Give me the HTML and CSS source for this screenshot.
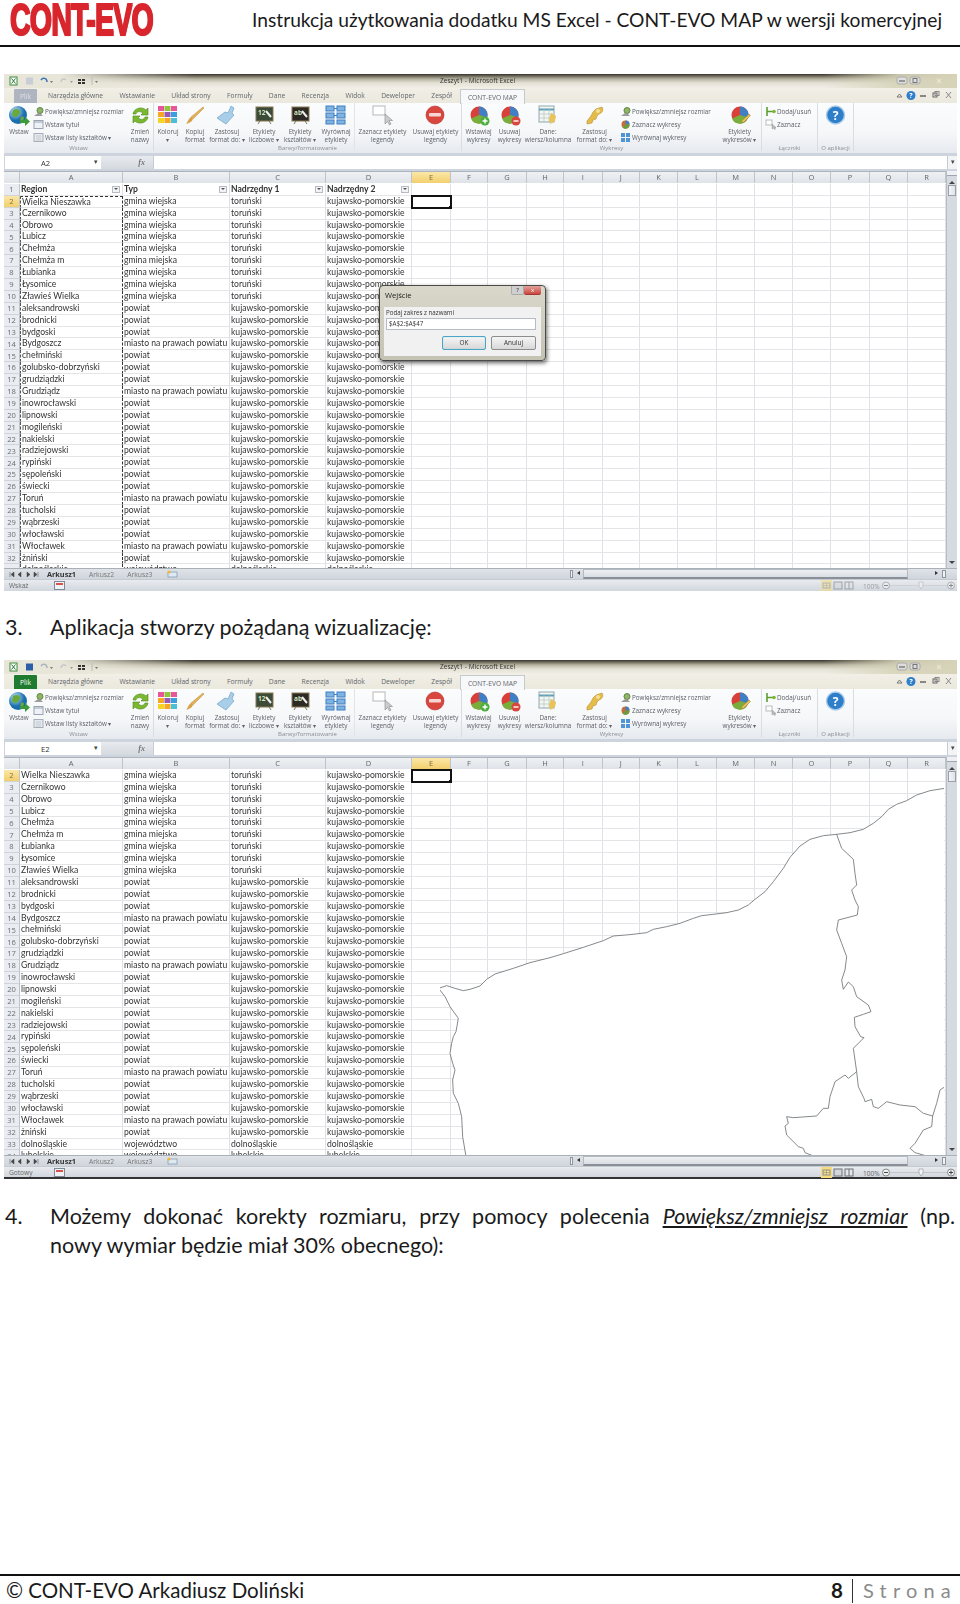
FILE: index.html
```html
<!DOCTYPE html>
<html lang="pl">
<head>
<meta charset="utf-8">
<title>CONT-EVO MAP</title>
<link rel="stylesheet" href="styles.css">
</head>
<body>
<header class="page-head">
  <div class="logo"><span class="logo-text">CONT-EVO</span></div>
  <div class="doc-title">Instrukcja użytkowania dodatku MS Excel - CONT-EVO MAP w wersji komercyjnej</div>
</header>
<main>
  <section class="sheet sheet-one" id="sheet1"></section>
  <div class="step step-three"><span class="num">3.</span><div class="step-text">Aplikacja stworzy pożądaną wizualizację:</div></div>
  <section class="sheet sheet-two" id="sheet2"></section>
  <div class="step step-four"><span class="num">4.</span><div class="step-text"><div class="line-just">Możemy dokonać korekty rozmiaru, przy pomocy polecenia <em class="cmd">Powiększ/zmniejsz rozmiar</em> (np.</div><div>nowy wymiar będzie miał 30% obecnego):</div></div></div>
</main>
<footer class="page-foot">
  <div class="copy">© CONT-EVO Arkadiusz Doliński</div>
  <div class="pager"><b>8</b><span class="bar"></span><span class="strona">Strona</span></div>
</footer>
<script src="app.js"></script>
</body>
</html>
```
FILE: styles.css
```css
* { box-sizing: border-box; }
html, body { margin: 0; padding: 0; background: #fff; }
body { width: 960px; height: 1604px; overflow: hidden; display: flex; flex-direction: column; font-family: Lato, "Noto Sans", sans-serif; color: #111; }

.page-head { height: 47px; flex: none; display: flex; align-items: flex-start; justify-content: space-between; border-bottom: 2px solid #111; padding: 0 18px 0 10px; }
.logo { width: 145px; height: 40px; }
.logo-text { display: inline-block; font: 700 43px/38px "Liberation Sans", sans-serif; color: #d9252c; -webkit-text-stroke: 2px #d9252c; letter-spacing: -1px; transform: scale(.66, 1.02); transform-origin: 0 0; white-space: nowrap; text-shadow: 1px 1px 1px #a33; }
.doc-title { font-size: 19.2px; line-height: 26px; margin-top: 7px; white-space: nowrap; color: #1a1a1a; }

main { flex: none; }

/* Excel window */
.sheet { position: relative; width: 953px; margin-left: 4px; display: flex; flex-direction: column; font-family: "Open Sans", sans-serif; color: #5d6168; filter: blur(.38px); background: #cdd4dd; overflow: hidden; }
.sheet-one { height: 517px; margin-top: 27px; }
.sheet-two { height: 518px; margin-top: 18px; box-shadow: 0 1px 0 #333; }

.titlebar { height: 14px; flex: none; position: relative; display: flex; align-items: center; background: linear-gradient(90deg, #e8e6d8 0, #e8e6d8 6%, rgba(232,230,216,0) 20%, rgba(232,230,216,0) 86%, rgba(214,211,185,.9) 94%, #d6d3b9 100%), linear-gradient(180deg, #35322b 0, #6c685a 2px, #b8b4a2 5px, #e4e2d6 9px, #f1efe6 14px); }
.qat { margin-left: 4px; width: 92px; height: 12px; }
.app-name { position: absolute; left: 436px; top: 2px; font-size: 6.6px; line-height: 10px; color: #333; white-space: nowrap; }
.winbtns { position: absolute; right: 2px; top: 1px; width: 60px; height: 12px; }

.tabs { height: 15px; flex: none; position: relative; display: flex; align-items: center; padding-left: 44px; background: linear-gradient(180deg, #f1efe6, #ebe9dd); font-size: 6.7px; white-space: nowrap; }
.tab { margin-right: 16.3px; color: #62656b; }
.tab-file { position: absolute; left: 10px; top: 1px; width: 23px; height: 14px; display: flex; align-items: center; justify-content: center; color: #fff; background: #1f7c2f; margin: 0; border-radius: 1px 1px 0 0; }
.sheet-one .tab-file { background: #aeb4c0; color: #dfe2e6; }
.tab-active { position: absolute; left: 456px; top: 1px; width: 65px; height: 15px; display: flex; align-items: center; justify-content: center; margin: 0; background: #f7f8fa; border: 1px solid #c6c9cd; border-bottom: 0; }
.tabs-right { position: absolute; right: 3px; top: 1px; width: 62px; height: 13px; }

.ribbon { height: 50px; flex: none; display: flex; background: linear-gradient(180deg, #fbfcfd 0, #f5f7f9 60%, #e6e9ee 100%); font-size: 6.3px; line-height: 7.8px; }
.group { position: relative; flex: none; display: flex; border-right: 1px solid #d9dce1; height: 48px; }
.group-label { position: absolute; left: 0; right: 0; bottom: -1px; text-align: center; color: #8b8f95; font-size: 6px; line-height: 8px; white-space: nowrap; }
.big { flex: none; display: flex; flex-direction: column; align-items: center; text-align: center; padding-top: 2px; white-space: pre-line; }
.big .ico { height: 21px; width: 22px; margin-bottom: 2px; flex: none; }
.big-sep { border-right: 1px solid #e2e4e8; }
.smalls { flex: none; display: flex; flex-direction: column; padding: 2px 0 0 0; }
.small { height: 13.2px; display: flex; align-items: center; white-space: nowrap; margin-left: -1px; }
.small .ico16 { width: 11px; height: 11px; margin-right: 1px; flex: none; }

.formula { height: 13px; margin-top: 3px; flex: none; display: flex; align-items: stretch; font-size: 7.6px; color: #333; }
.namebox { width: 96px; margin-left: 1px; background: #fff; position: relative; display: flex; align-items: center; padding-left: 36px; }
.namebox::after { content: "▾"; position: absolute; right: 3px; top: 0; font-size: 7px; line-height: 12px; color: #444; }
.fx-area { width: 52px; display: flex; align-items: center; justify-content: flex-end; padding-right: 8px; font: italic 700 8px "Liberation Serif", serif; color: #777; background: linear-gradient(180deg, #e7eaee, #d5dae0); }
.input { flex: 1; background: #fff; border-left: 1px solid #c7ccd2; }
.fx-drop { width: 10px; background: #f3f4f6; border-left: 1px solid #c7ccd2; text-align: center; line-height: 11px; font-size: 7px; color: #444; }

.workarea { flex: 1; min-height: 0; margin-top: 2px; display: flex; position: relative; }
.cells { flex: 1; min-width: 0; overflow: hidden; background: #fff; border-top: 1px solid #aeb4bc; }
.grid { display: grid; grid-template-columns: 16px 103px 107px 96px 86px 39px 37px 39px 37px 38.5px 37.5px 38px 39px 38px 38px 38px 39px 38px 38px; grid-auto-rows: 11.9px; font-family: Lato, sans-serif; font-size: 8.6px; line-height: 10.5px; color: #333; }
.head { height: 11px; display: flex; align-items: center; justify-content: center; background: linear-gradient(180deg, #eff1f4, #dfe3e8); border-right: 1px solid #bfc4ca; color: #666; font-size: 7.5px; font-family: "Open Sans", sans-serif; }
.head-on { background: linear-gradient(180deg, #fbe7a8, #f3cf6d); color: #7b6a3c; }
.rownum { display: flex; align-items: center; justify-content: center; background: #e9ecf0; border-right: 1px solid #bfc4ca; border-bottom: 1px solid #d0d4d9; color: #6a6e74; font-size: 7.6px; font-family: "Open Sans", sans-serif; }
.rownum-on { background: linear-gradient(180deg, #fbe7a8, #f3cf6d); color: #84703c; }
.cell { position: relative; border-right: 1px solid #dfe1e4; border-bottom: 1px solid #e4e5e8; padding-left: 1px; white-space: nowrap; overflow: visible; min-width: 0; }
.cell-b { font-weight: 700; color: #333; }
.ants { border-left: 1px dashed #555; border-right: 1px dashed #333; }
.ants-top { border-top: 1px dashed #333; }
.filter { position: absolute; right: 2px; top: 2px; width: 8px; height: 7px; border: 1px solid #b8bcc2; background: #f2f3f5; }
.filter::after { content: ""; position: absolute; left: 1px; top: 1.5px; border: 2px solid transparent; border-top: 2.5px solid #555; }
.selected { outline: 2px solid #111; outline-offset: -1px; z-index: 1; }
.selected::after { content: ""; position: absolute; right: -2px; bottom: -2px; width: 3px; height: 3px; background: #111; }

.vscroll { width: 11px; flex: none; position: relative; background: #d6dbe2; border-left: 1px solid #b8bec6; }
.v-split { height: 5px; background: #eef0f3; border-bottom: 1px solid #9ea5ae; }
.v-up, .v-down { position: absolute; left: 2px; width: 0; height: 0; border: 3px solid transparent; }
.v-up { top: 7px; border-bottom: 3px solid #444; }
.v-down { bottom: 1px; border-top: 3px solid #444; }
.v-thumb { position: absolute; left: 1px; right: 1px; top: 14px; height: 11px; background: linear-gradient(90deg, #f4f5f7, #dfe3e8); border: 1px solid #99a0a9; }

.map { position: absolute; left: 436px; top: 13px; width: 504px; height: 386px; z-index: 2; }
.map-land { fill: #fff; stroke: #666b6f; stroke-width: 2.4; stroke-linejoin: round; }
.map-line { fill: none; stroke: #666b6f; stroke-width: 2.4; stroke-linejoin: round; }

.sheettabs { height: 11px; flex: none; display: flex; align-items: center; position: relative; z-index: 3; background: linear-gradient(180deg, #dfe3e8, #cfd5dc); border-top: 1px solid #aab0b8; font-size: 6.8px; white-space: nowrap; }
.nav-ico { width: 36px; height: 9px; margin-left: 3px; margin-right: 4px; }
.stab { margin-right: 13px; color: #777; }
.stab-on { font-weight: 700; color: #333; font-size: 7.3px; }
.newtab { width: 14px; height: 8px; }
.hsplit { position: absolute; left: 566px; top: 1px; width: 3px; height: 8px; background: #f2f3f5; border: 1px solid #8f959d; }
.h-left, .h-right { position: absolute; top: 2px; border: 2.5px solid transparent; }
.h-left { left: 571px; border-right: 3px solid #333; }
.h-right { left: 931px; border-left: 3px solid #333; }
.hthumb { position: absolute; left: 579px; width: 325px; top: 0; bottom: 0; background: linear-gradient(180deg, #eef0f3, #d9dde3); border: 1px solid #b4bac2; border-bottom: 2px solid #8a9099; }
.hend { position: absolute; left: 938px; top: 1px; width: 4px; height: 8px; background: #f2f3f5; border: 1px solid #8f959d; }

.status { height: 12px; flex: none; display: flex; align-items: center; position: relative; z-index: 3; background: linear-gradient(180deg, #e8ebef, #d2d7de); border-top: 1px solid #c5cad0; font-size: 6.6px; color: #666; }
.sheet-two .status { border-bottom: 1px solid #333; }
.status-label { width: 50px; padding-left: 5px; }
.macro { width: 11px; height: 9px; }
.status-right { position: absolute; right: 1px; top: 0; height: 11px; width: 136px; }
.sheet-one .status-right { opacity: .55; }

.dialog { position: absolute; left: 375px; top: 114px; width: 167px; height: 76px; z-index: 5; border-radius: 4px; border: 1px solid #4a4a46; background: linear-gradient(180deg, #d9d8cb, #c3c2b3); box-shadow: 1px 2px 4px rgba(0,0,0,.6); padding: 0 4px 4px; display: flex; flex-direction: column; color: #333; }
.dlg-head { height: 21px; flex: none; position: relative; font-size: 7.6px; line-height: 18px; padding-left: 1px; color: #222; }
.dlg-help { position: absolute; right: 17px; top: 0; width: 13px; height: 9px; background: #cfcfcf; border: 1px solid #aaa; border-top: 0; text-align: center; font-size: 6px; line-height: 8px; border-radius: 0 0 2px 2px; }
.dlg-close { position: absolute; right: 0; top: 0; width: 17px; height: 9px; background: linear-gradient(180deg, #e4a09a, #c9483f); border-bottom: 1px solid #a33; text-align: center; font-size: 6px; line-height: 8px; color: #fff; border-radius: 0 0 2px 2px; }
.dlg-body { flex: 1; background: #f1f1f1; padding: 1px 5px 0 2px; font-size: 6.2px; line-height: 9px; }
.dlg-input { height: 12px; margin-top: 1px; background: #fff; border: 1px solid #b6bcc4; padding-left: 2px; line-height: 10px; }
.dlg-btns { display: flex; justify-content: flex-end; gap: 5px; margin-top: 6px; }
.btn { height: 14px; border-radius: 2px; text-align: center; line-height: 12px; background: linear-gradient(180deg, #f5f5f5, #d8d8d8); border: 1px solid #8d8d8d; font-size: 6.4px; }
.btn-ok { width: 44px; border-color: #4aa5c9; box-shadow: inset 0 0 1px #7cc; }
.btn-no { width: 45px; }

/* Text steps */
.step { display: flex; font-size: 21.5px; line-height: 29px; color: #1a1a1a; margin-left: 5px; width: 950px; }
.num { width: 45px; flex: none; }
.step-text { flex: 1; min-width: 0; }
.step-three { margin-top: 22px; }
.step-four { margin-top: 24px; }
.line-just { text-align: justify; text-align-last: justify; }
.cmd { font-style: italic; text-decoration: underline; }

/* Footer */
.page-foot { margin-top: auto; height: 30px; flex: none; border-top: 2px solid #111; display: flex; justify-content: space-between; align-items: flex-start; padding: 1px 9px 0 6px; font-size: 20.5px; line-height: 27px; color: #1a1a1a; }
.pager { display: flex; align-items: center; height: 27px; }
.bar { width: 1px; height: 24px; background: #333; margin: 0 10px 0 9px; }
.strona { color: #8b8b8b; letter-spacing: 6.2px; font-size: 20px; margin-right: -6px; }
```
FILE: app.js
```js
const P = "kujawsko-pomorskie", T = "toruński", G = "gmina wiejska", W = "powiat", M = "miasto na prawach powiatu";
const data = [
  ["Wielka Nieszawka", G, T, P], ["Czernikowo", G, T, P], ["Obrowo", G, T, P], ["Lubicz", G, T, P],
  ["Chełmża", G, T, P], ["Chełmża m", "gmina miejska", T, P], ["Łubianka", G, T, P], ["Łysomice", G, T, P],
  ["Zławieś Wielka", G, T, P], ["aleksandrowski", W, P, P], ["brodnicki", W, P, P], ["bydgoski", W, P, P],
  ["Bydgoszcz", M, P, P], ["chełmiński", W, P, P], ["golubsko-dobrzyński", W, P, P], ["grudziądzki", W, P, P],
  ["Grudziądz", M, P, P], ["inowrocławski", W, P, P], ["lipnowski", W, P, P], ["mogileński", W, P, P],
  ["nakielski", W, P, P], ["radziejowski", W, P, P], ["rypiński", W, P, P], ["sępoleński", W, P, P],
  ["świecki", W, P, P], ["Toruń", M, P, P], ["tucholski", W, P, P], ["wąbrzeski", W, P, P],
  ["włocławski", W, P, P], ["Włocławek", M, P, P], ["żniński", W, P, P],
  ["dolnośląskie", "województwo", "dolnośląskie", "dolnośląskie"], ["lubelskie", "województwo", "lubelskie", "lubelskie"]
];
const letters = "ABCDEFGHIJKLMNOPQR".split("");

const pie = (extra) => `<circle cx="11" cy="10" r="8.5" fill="#d8413a"/><path d="M11 10V1.5a8.5 8.5 0 0 1 8 11.5z" fill="#3f7fc4"/><path d="M11 10l8 2.5a8.5 8.5 0 0 1-16 1z" fill="#79ad3c"/>${extra}`;
const board = (t, bg) => `<rect x="3" y="2" width="17" height="14" fill="${bg}" stroke="#8a7a50"/><text x="5" y="10" font-size="6.5" font-weight="700" fill="#cfe6c0" font-family="Open Sans">${t}</text><path d="M13 6l5 6" stroke="#eee" stroke-width="2"/><path d="M7 16l-2 3M16 16l2 3" stroke="#776"/>`;
const icons = {
  globe: `<defs><radialGradient id="gl" cx=".35" cy=".3"><stop offset="0" stop-color="#bfe4f7"/><stop offset="1" stop-color="#1b6fae"/></radialGradient></defs><circle cx="10" cy="10" r="9" fill="url(#gl)"/><path d="M5 5c3-2 6-1 7 1s-2 5-4 6-3-1-4-3zM13 12c2-1 3 0 3 1s-2 4-3 4-1-3 0-5z" fill="#69a83a"/><path d="M12 15h5v-3l5 4.500-5 4.500v-3h-5z" fill="#3c9a3a"/>`,
  cycle: `<path d="M4 9c1-6 9-8 13-4l2-2v7h-7l2-2c-3-2-6-2-7 1z" fill="#7cb82f" stroke="#4c8a1c" stroke-width=".6"/><path d="M19 12c-1 6-9 8-13 4l-2 2v-7h7l-2 2c3 2 6 2 7-1z" fill="#7cb82f" stroke="#4c8a1c" stroke-width=".6"/>`,
  colors: `<rect x="1" y="1" width="6" height="5" fill="#e8559a"/><rect x="7.500" y="1" width="6" height="5" fill="#8ec63f"/><rect x="14" y="1" width="6" height="5" fill="#e8559a"/><rect x="1" y="7" width="6" height="5" fill="#f7a823"/><rect x="7.500" y="7" width="6" height="5" fill="#9b59b6"/><rect x="14" y="7" width="6" height="5" fill="#39a0dc"/><rect x="1" y="13" width="6" height="5" fill="#f5d327"/><rect x="7.500" y="13" width="6" height="5" fill="#f7a823"/><rect x="14" y="13" width="6" height="5" fill="#4cbfd8"/>`,
  brush: `<path d="M19 2l1 1-11 11-2-2z" fill="#e3b15c" stroke="#b98d3c" stroke-width=".5"/><path d="M7 12l2 2c-1 3-4 4-7 5 2-2 2-5 5-7z" fill="#d9a24a"/>`,
  apply: `<path d="M15 1l3 2-2 5 2 2-8 9-9-6 8-6 3 1z" fill="#a9cfe8" stroke="#6fa2c8" stroke-width=".7"/>`,
  num: board("12", "#3c4a38"),
  abc: board("ab", "#2d2a26"),
  align: `<rect x="1" y="1" width="8" height="5" fill="#7fb3e0" stroke="#3f7fc4"/><rect x="12" y="1" width="8" height="5" fill="#7fb3e0" stroke="#3f7fc4"/><rect x="1" y="8" width="8" height="5" fill="#7fb3e0" stroke="#3f7fc4"/><rect x="12" y="8" width="8" height="5" fill="#7fb3e0" stroke="#3f7fc4"/><rect x="1" y="15" width="8" height="4" fill="#7fb3e0" stroke="#3f7fc4"/><rect x="12" y="15" width="8" height="4" fill="#7fb3e0" stroke="#3f7fc4"/><path d="M9 3.500h3M9 10.500h3" stroke="#3f7fc4"/>`,
  pick: `<rect x="1" y="1" width="12" height="9" fill="#fff" stroke="#b8b8b8"/><path d="M13 9v10l2.500-2.500 2 3.500 1.500-1-2-3.500h3.500z" fill="#ccc" stroke="#888" stroke-width=".6"/>`,
  stop: `<circle cx="10" cy="10" r="9" fill="#d8463d" stroke="#b32d26" stroke-width=".6"/><rect x="4" y="8" width="12" height="3.500" rx="1" fill="#f6d5d2"/>`,
  pieAdd: pie(`<circle cx="17" cy="16" r="4.500" fill="#4cae3c"/><path d="M14.500 16h5M17 13.500v5" stroke="#fff" stroke-width="1.400"/>`),
  pieDel: pie(`<circle cx="17" cy="16" r="4.500" fill="#d8463d"/><path d="M14.500 16h5" stroke="#fff" stroke-width="1.400"/>`),
  table: `<rect x="2" y="1" width="15" height="16" fill="#f4f6ee" stroke="#8fa7b4"/><path d="M2 4.500h15" stroke="#62a0b8" stroke-width="2"/><path d="M2 9h15M2 13h15M7 4v13M12 4v13" stroke="#a9bec8" stroke-width=".6"/><path d="M14 8l5 3-1 5-5 3-1-5z" fill="#e8c35a"/>`,
  gold: `<path d="M18 2c2 3 0 6-3 7l-2 2-1 3-3 1-1 3-5 1 0-3 4-5 2-4 3-3z" fill="#e5bb4a" stroke="#b88e2d" stroke-width=".6"/><circle cx="14" cy="6" r="2" fill="#f5df98"/>`,
  piePen: pie(`<path d="M20 9l1.500 1.500-7 7-2-.5.500-1.500z" fill="#e8c35a" stroke="#9a7a2c" stroke-width=".5"/>`),
  help: `<circle cx="10.500" cy="10" r="9" fill="#2e7ec9" stroke="#a9cdea" stroke-width="1.400"/><text x="10.500" y="14.500" text-anchor="middle" font-size="12" font-weight="700" fill="#fff" font-family="Open Sans">?</text>`
};
const small = {
  zoom: `<circle cx="7" cy="4.500" r="3" fill="#8fb56a" stroke="#62833f"/><path d="M1 10l4-3 3 1 2 2z" fill="#9c9c9c"/>`,
  title: `<rect x="1" y="1.500" width="9" height="8" fill="#eef1f5" stroke="#9aa4b0"/><path d="M1 3h9" stroke="#9aa4b0"/>`,
  list: `<rect x="1" y="1.500" width="9" height="8" fill="#e5e9ee" stroke="#a6afb9"/><path d="M3 4h5M3 6h5M3 8h5" stroke="#b8c0c9" stroke-width=".7"/>`,
  dot: `<circle cx="5.500" cy="5.500" r="4" fill="#c76d3c"/><path d="M5.500 5.500V1.500a4 4 0 0 1 4 4z" fill="#3f7fc4"/><path d="M5.500 5.500h4a4 4 0 0 1-7 3z" fill="#6d9c3e"/>`,
  blocks: `<rect x="1" y="1" width="4" height="4" fill="#4f94d4"/><rect x="6" y="1" width="4" height="4" fill="#4f94d4"/><rect x="1" y="6" width="4" height="4" fill="#4f94d4"/><rect x="6" y="6" width="4" height="4" fill="#4f94d4"/>`,
  link: `<path d="M2 1v9M2 5.500h8" stroke="#5ba030" stroke-width="1.600"/><circle cx="9" cy="5.500" r="1.800" fill="#7cb82f"/>`,
  mark: `<rect x="1" y="1" width="6" height="5" fill="#fff" stroke="#bbb"/><path d="M7 5v5l1.500-1 1 1.500 1-.5-1-1.500h1.500z" fill="#bbb" stroke="#888" stroke-width=".4"/>`
};
const ico = (k) => `<svg class="ico" viewBox="0 0 22 21">${icons[k]}</svg>`;
const big = (w, k, label, sep) => `<div class="big${sep ? " big-sep" : ""}" style="width:${w}px">${ico(k)}<span>${label}</span></div>`;
const smalls = (w, pad, list) => `<div class="smalls" style="width:${w}px;padding-left:${pad}px">${list.map(([k, t]) => `<div class="small"><svg class="ico16" viewBox="0 0 11 11">${small[k]}</svg>${t}</div>`).join("")}</div>`;
const group = (w, label, body) => `<div class="group" style="width:${w}px">${body}<div class="group-label">${label}</div></div>`;

const ribbon = `<div class="ribbon">
${group(150, "Wstaw", big(30, "globe", "Wstaw") + smalls(93, 0, [["zoom", "Powiększ/zmniejsz rozmiar"], ["title", "Wstaw tytuł"], ["list", "Wstaw listy kształtów ▾"]]) + big(26, "cycle", "Zmień\nnazwy"))}
${group(308, "Barwy/formatowanie", big(28, "colors", "Koloruj\n▾") + big(26, "brush", "Kopiuj\nformat") + big(38, "apply", "Zastosuj\nformat do: ▾") + big(36, "num", "Etykiety\nliczbowe ▾") + big(36, "abc", "Etykiety\nkształtów ▾") + big(37, "align", "Wyrównaj\netykiety", true) + big(55, "pick", "Zaznacz etykiety\nlegendy") + big(51, "stop", "Usuwaj etykiety\nlegendy"))}
${group(300, "Wykresy", big(33, "pieAdd", "Wstawiaj\nwykresy") + big(29, "pieDel", "Usuwaj\nwykresy") + big(48, "table", "Dane:\nwiersz/kolumna") + big(45, "gold", "Zastosuj\nformat do: ▾") + smalls(101, 4, [["zoom", "Powiększ/zmniejsz rozmiar"], ["dot", "Zaznacz wykresy"], ["blocks", "Wyrównaj wykresy"]]) + big(43, "piePen", "Etykiety\nwykresów ▾"))}
${group(56, "Łączniki", smalls(55, 4, [["link", "Dodaj/usuń"], ["mark", "Zaznacz"]]))}
${group(36, "O aplikacji", big(35, "help", ""))}
</div>`;

const titlebar = (save) => `<div class="titlebar">
<svg class="qat" viewBox="0 0 92 12"><rect x="2" y="2" width="7" height="8" fill="#fff" stroke="#3c8a3c"/><path d="M3.500 3.500l4 5M7.500 3.500l-4 5" stroke="#1f7c2f"/><rect x="18" y="2.500" width="7" height="7" fill="${save}"/><path d="M33 5c2-3 6-2 6 2" fill="none" stroke="${save === "#2a5fa8" ? "#a8b3c0" : "#3f73b8"}" stroke-width="1.500"/><path d="M42 6h3l-1.500 2z" fill="#777"/><path d="M53 7c0-3 3-4 5-2" fill="none" stroke="#c0c4c8" stroke-width="1.300"/><path d="M62 6h3l-1.500 2z" fill="#999"/><path d="M70 4h3v2h-3zM74 4h3v2h-3zM70 7h3v2h-3zM74 7h3v2h-3z" fill="#333"/><path d="M84 2v8" stroke="#bbb"/><path d="M87 6h3l-1.500 2z" fill="#777"/></svg>
<span class="app-name">Zeszyt1 - Microsoft Excel</span>
<svg class="winbtns" viewBox="0 0 60 12"><rect x="2" y="2" width="10" height="7" rx="2" fill="#ddd" stroke="#aaa"/><path d="M4 6h6" stroke="#777" stroke-width="1.400"/><rect x="15" y="2" width="10" height="7" rx="2" fill="#ddd" stroke="#aaa"/><rect x="18" y="3.500" width="4" height="4" fill="none" stroke="#777"/><path d="M42 4l4 4M46 4l-4 4" stroke="#e8e6d0" stroke-width="1.200"/></svg>
</div>`;

const tabs = `<div class="tabs"><span class="tab tab-file">Plik</span>${["Narzędzia główne", "Wstawianie", "Układ strony", "Formuły", "Dane", "Recenzja", "Widok", "Deweloper", "Zespół"].map(t => `<span class="tab">${t}</span>`).join("")}<span class="tab tab-active">CONT-EVO MAP</span>
<svg class="tabs-right" viewBox="0 0 62 13"><path d="M5 8l2.500-3 2.500 3z" fill="none" stroke="#777"/><circle cx="19" cy="6.500" r="4.500" fill="#2e7ec9"/><text x="19" y="9" text-anchor="middle" font-size="7" font-weight="700" fill="#fff" font-family="Open Sans">?</text><path d="M28 7h6" stroke="#666" stroke-width="1.500"/><rect x="41" y="4" width="4" height="4" fill="none" stroke="#666"/><rect x="43" y="2.500" width="4" height="4" fill="none" stroke="#888"/><path d="M54 3l5 6M59 3l-5 6" stroke="#888"/></svg></div>`;

const formula = (ref) => `<div class="formula"><div class="namebox">${ref}</div><div class="fx-area">fx</div><div class="input"></div><div class="fx-drop">▾</div></div>`;

function grid(firstRow, lastRow, hasFilters, ants) {
  let h = `<div class="grid"><div class="head"></div>` + letters.map(l => `<div class="head${l === "E" ? " head-on" : ""}">${l}</div>`).join("");
  if (hasFilters) {
    h += `<div class="rownum">1</div>` + ["Region", "Typ", "Nadrzędny 1", "Nadrzędny 2"].map(t => `<div class="cell cell-b">${t}<span class="filter"></span></div>`).join("") + `<div class="cell"></div>`.repeat(14);
  }
  for (let r = firstRow; r <= lastRow; r++) {
    const d = data[r - 2], on = r === 2;
    h += `<div class="rownum${on ? " rownum-on" : ""}">${r}</div>`;
    d.forEach((t, i) => { h += `<div class="cell${ants && i === 0 ? " ants" : ""}${ants && i === 0 && on ? " ants-top" : ""}">${t}</div>`; });
    h += `<div class="cell${on ? " selected" : ""}"></div>` + `<div class="cell"></div>`.repeat(13);
  }
  return h + `</div>`;
}

const vscroll = `<div class="vscroll"><div class="v-split"></div><span class="v-up"></span><span class="v-thumb"></span><span class="v-down"></span></div>`;

const bottom = (label) => `<div class="sheettabs"><svg class="nav-ico" viewBox="0 0 36 9"><path d="M3 2v5M7 2L4 4.500 7 7zM14 2l-3 2.500L14 7zM20 2l3 2.500L20 7zM27 2l3 2.500L27 7zM31 2v5" fill="#444" stroke="#444" stroke-width=".5"/></svg><span class="stab stab-on">Arkusz1</span><span class="stab">Arkusz2</span><span class="stab">Arkusz3</span><svg class="newtab" viewBox="0 0 14 8"><rect x="3" y="2" width="9" height="5" fill="#dfe9f3" stroke="#7a93ad" stroke-width=".7"/><circle cx="4" cy="2" r="1.500" fill="#f2b632"/></svg><span class="hsplit"></span><span class="h-left"></span><span class="hthumb"></span><span class="h-right"></span><span class="hend"></span></div>
<div class="status"><span class="status-label">${label}</span><svg class="macro" viewBox="0 0 11 9"><rect x=".5" y=".5" width="10" height="8" fill="#eef2f6" stroke="#7f8a96"/><rect x="2" y="2" width="7" height="2" fill="#d9534a"/></svg>
<svg class="status-right" viewBox="0 0 136 11"><rect x="1" y="0" width="11" height="11" fill="#f6dc7e"/><rect x="3" y="3" width="7" height="5" fill="none" stroke="#8a8f96"/><path d="M6.500 3v5M3 5.500h7" stroke="#8a8f96" stroke-width=".6"/><rect x="14" y="2" width="8" height="7" fill="#d3d7dc" stroke="#6d7277"/><rect x="25" y="2" width="8" height="7" fill="#e3e6ea" stroke="#6d7277"/><path d="M29 2v7" stroke="#6d7277"/><text x="43" y="8.500" font-size="6.500" fill="#666" font-family="Open Sans">100%</text><circle cx="66" cy="5.500" r="3.500" fill="#eef0f3" stroke="#888"/><path d="M64 5.500h4" stroke="#444"/><path d="M70 5.500h58" stroke="#c3c7cc"/><path d="M99 2h4v4l-2 3-2-3z" fill="#f3f4f6" stroke="#8d9299" stroke-width=".6"/><circle cx="131" cy="5.500" r="3.500" fill="#eef0f3" stroke="#888"/><path d="M129 5.500h4M131 3.500v4" stroke="#444"/></svg></div>`;

const dialog = `<div class="dialog"><div class="dlg-head">Wejście<span class="dlg-help">?</span><span class="dlg-close">x</span></div><div class="dlg-body">Podaj zakres z nazwami<div class="dlg-input">$A$2:$A$47</div><div class="dlg-btns"><div class="btn btn-ok">OK</div><div class="btn btn-no">Anuluj</div></div></div></div>`;

const map = `<svg class="map" viewBox="0 0 1512 1158" preserveAspectRatio="none">
<path class="map-land" d="M1514 55L1470 62 1430 75 1400 92 1370 103 1345 118 1325 140 1300 160 1270 178 1230 188 1190 193 1150 197 1110 208 1080 228 1050 262 1030 295 1000 335 975 365 945 388 925 405 895 420 860 428 820 433 785 437 760 445 720 460 680 470 640 478 620 488 570 494 520 498 490 512 430 532 370 551 330 563 270 578 220 595 165 612 140 628 120 648 90 658 70 662 45 655 20 647 -4 655 15 680 30 710 55 745 48 785 40 800 35 820 30 850 38 880 45 900 38 930 40 970 55 1000 65 1040 68 1100 78 1160 1514 1160Z"/>
<path class="map-line" d="M1190 193L1205 235 1240 268 1245 310 1250 345 1235 360 1245 390 1255 410 1252 435 1195 450 1190 480 1205 520 1220 560 1215 600 1205 630 1210 658 1225 636 1240 650 1250 680 1285 705 1293 725 1270 733 1243 742 1245 770 1262 800 1272 803 1240 835 1245 870 1250 905 1255 950 1272 985 1275 995 1295 988 1300 1010 1315 1015 1340 995 1380 1005 1425 1010 1450 1030 1478 1038 1490 1000 1500 960 1512 952"/>
<path class="map-line" d="M1250 905L1225 925 1215 915 1185 935 1170 980 1165 1015 1150 1015 1130 1038 1060 1043 1040 1040 1045 1060 1035 1068 1040 1095 1075 1130 1090 1135 1095 1148 1120 1158"/>
<path class="map-line" d="M1478 1038L1475 1070 1450 1080 1425 1120 1410 1135 1425 1148 1460 1158"/>
</svg>`;

document.getElementById("sheet1").innerHTML = titlebar("#c9ced6") + tabs + ribbon + formula("A2") +
  `<div class="workarea"><div class="cells">${grid(2, 33, true, true)}</div>${vscroll}${dialog}</div>` + bottom("Wskaż");
document.getElementById("sheet2").innerHTML = titlebar("#2a5fa8") + tabs + ribbon + formula("E2") +
  `<div class="workarea"><div class="cells">${grid(2, 34, false, false)}</div>${vscroll}${map}</div>` + bottom("Gotowy");
```
